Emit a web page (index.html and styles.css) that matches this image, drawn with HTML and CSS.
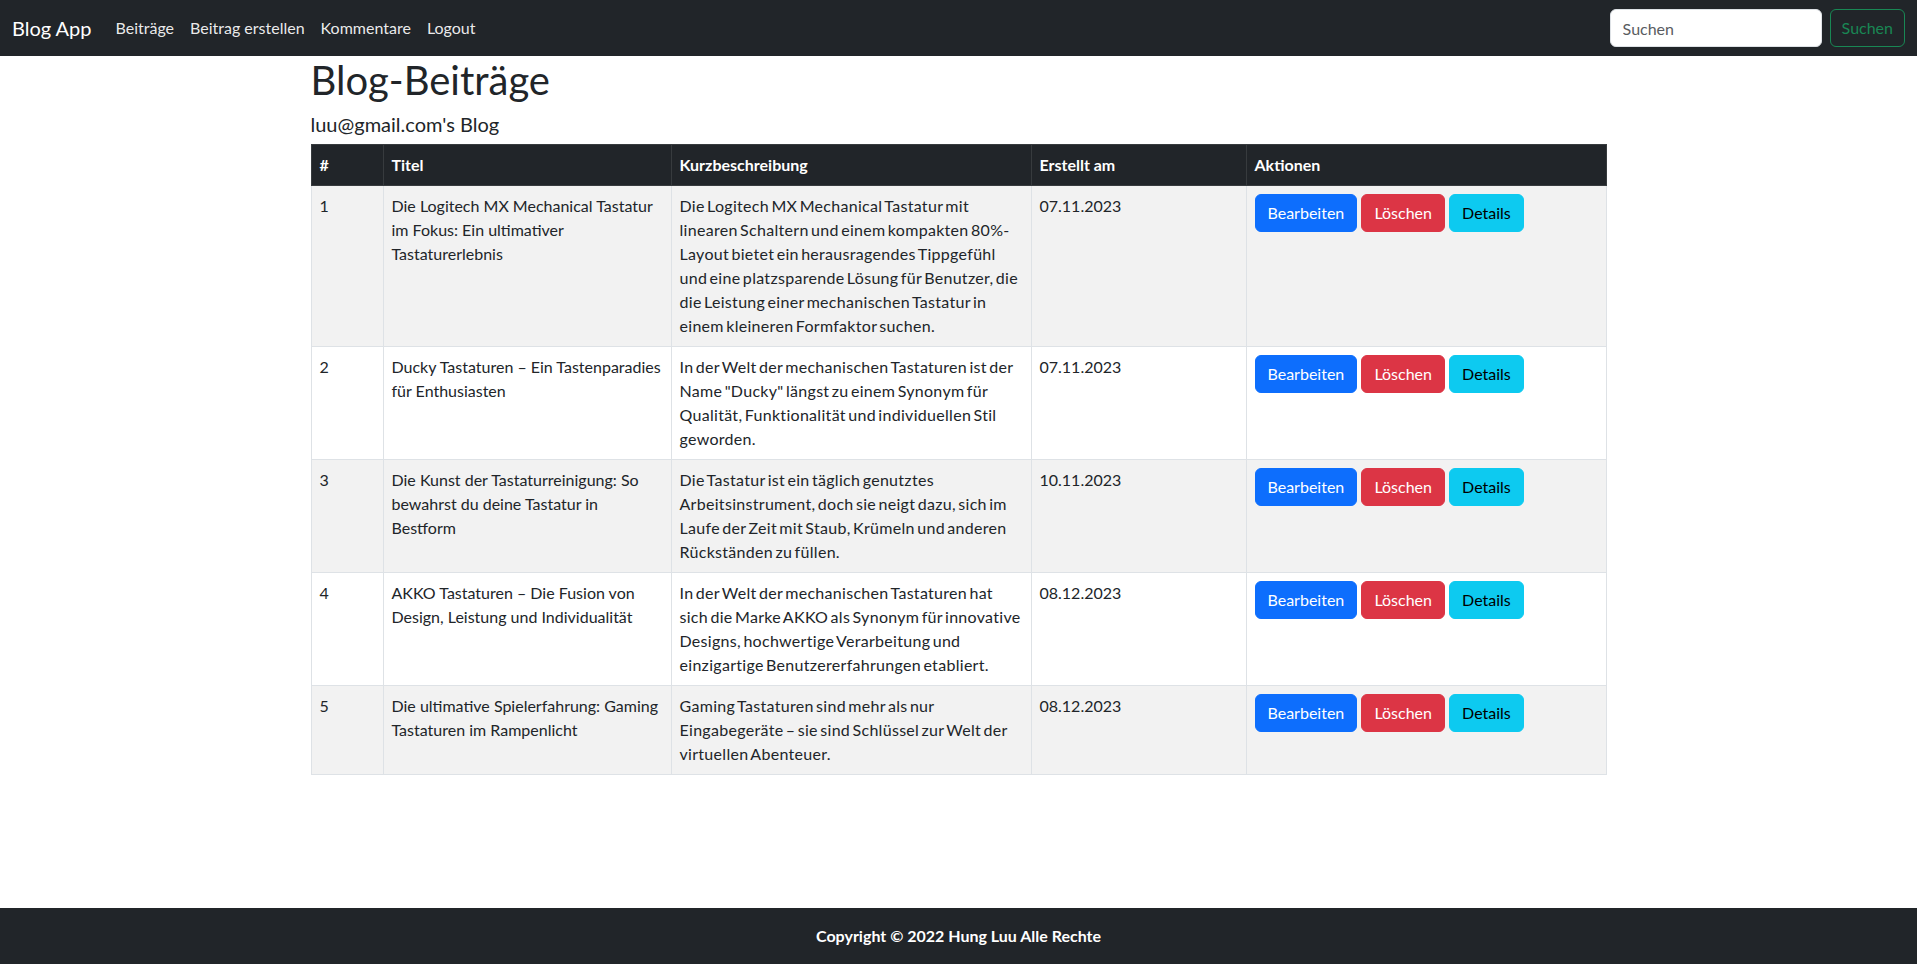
FILE: index.html
```html
<!DOCTYPE html>
<html lang="de">
<head>
<meta charset="utf-8">
<title>Blog App</title>
<link rel="stylesheet" href="styles.css">
</head>
<body>
<nav class="navbar">
  <div class="nav-left">
    <a class="brand" href="#">Blog App</a>
    <ul class="nav-links">
      <li><a href="#">Beiträge</a></li>
      <li><a href="#">Beitrag erstellen</a></li>
      <li><a href="#">Kommentare</a></li>
      <li><a href="#">Logout</a></li>
    </ul>
  </div>
  <form class="search">
    <input class="search-input" type="search" placeholder="Suchen">
    <button class="search-btn" type="button">Suchen</button>
  </form>
</nav>

<main class="container">
  <h1 class="title">Blog-Beiträge</h1>
  <h5 class="subtitle">luu@gmail.com's Blog</h5>
  <table class="posts">
    <colgroup>
      <col class="c-num"><col class="c-title"><col class="c-desc"><col class="c-date"><col class="c-act">
    </colgroup>
    <thead>
      <tr><th>#</th><th>Titel</th><th>Kurzbeschreibung</th><th>Erstellt am</th><th>Aktionen</th></tr>
    </thead>
    <tbody>
      <tr>
        <td>1</td>
        <td>Die Logitech MX Mechanical Tastatur im Fokus: Ein ultimativer Tastaturerlebnis</td>
        <td class="desc">Die Logitech MX Mechanical Tastatur mit linearen Schaltern und einem kompakten 80%-Layout bietet ein herausragendes Tippgefühl und eine platzsparende Lösung für Benutzer, die die Leistung einer mechanischen Tastatur in einem kleineren Formfaktor suchen.</td>
        <td>07.11.2023</td>
        <td><a class="btn btn-primary" href="#">Bearbeiten</a> <a class="btn btn-danger" href="#">Löschen</a> <a class="btn btn-info" href="#">Details</a></td>
      </tr>
      <tr>
        <td>2</td>
        <td>Ducky Tastaturen – Ein Tastenparadies für Enthusiasten</td>
        <td class="desc">In der Welt der mechanischen Tastaturen ist der Name "Ducky" längst zu einem Synonym für Qualität, Funktionalität und individuellen Stil geworden.</td>
        <td>07.11.2023</td>
        <td><a class="btn btn-primary" href="#">Bearbeiten</a> <a class="btn btn-danger" href="#">Löschen</a> <a class="btn btn-info" href="#">Details</a></td>
      </tr>
      <tr>
        <td>3</td>
        <td>Die Kunst der Tastaturreinigung: So bewahrst du deine Tastatur in Bestform</td>
        <td class="desc">Die Tastatur ist ein täglich genutztes Arbeitsinstrument, doch sie neigt dazu, sich im Laufe der Zeit mit Staub, Krümeln und anderen Rückständen zu füllen.</td>
        <td>10.11.2023</td>
        <td><a class="btn btn-primary" href="#">Bearbeiten</a> <a class="btn btn-danger" href="#">Löschen</a> <a class="btn btn-info" href="#">Details</a></td>
      </tr>
      <tr>
        <td>4</td>
        <td>AKKO Tastaturen – Die Fusion von Design, Leistung und Individualität</td>
        <td class="desc">In der Welt der mechanischen Tastaturen hat sich die Marke AKKO als Synonym für innovative Designs, hochwertige Verarbeitung und einzigartige Benutzererfahrungen etabliert.</td>
        <td>08.12.2023</td>
        <td><a class="btn btn-primary" href="#">Bearbeiten</a> <a class="btn btn-danger" href="#">Löschen</a> <a class="btn btn-info" href="#">Details</a></td>
      </tr>
      <tr>
        <td>5</td>
        <td>Die ultimative Spielerfahrung: Gaming Tastaturen im Rampenlicht</td>
        <td class="desc">Gaming Tastaturen sind mehr als nur Eingabegeräte – sie sind Schlüssel zur Welt der virtuellen Abenteuer.</td>
        <td>08.12.2023</td>
        <td><a class="btn btn-primary" href="#">Bearbeiten</a> <a class="btn btn-danger" href="#">Löschen</a> <a class="btn btn-info" href="#">Details</a></td>
      </tr>
    </tbody>
  </table>
</main>

<footer class="footer">
  <p>Copyright © 2022 Hung Luu Alle Rechte</p>
</footer>
</body>
</html>
```

FILE: styles.css
```css
* { box-sizing: border-box; }

html, body {
  margin: 0;
  padding: 0;
}

body {
  font-family: Lato, "Liberation Sans", sans-serif;
  font-size: 16px;
  line-height: 1.5;
  color: #212529;
  background: #fff;
  min-height: 100vh;
  display: flex;
  flex-direction: column;
}

a { text-decoration: none; }

.navbar {
  background: #212529;
  display: flex;
  align-items: center;
  justify-content: space-between;
  padding: 8px 12px;
  height: 56px;
}

.nav-left {
  display: flex;
  align-items: center;
}

.brand {
  color: #fff;
  font-size: 20px;
  line-height: 30px;
  padding: 5px 0;
  margin-right: 16px;
}

.nav-links {
  list-style: none;
  display: flex;
  margin: 0;
  padding: 0;
}

.nav-links a {
  display: block;
  color: rgba(255, 255, 255, 0.92);
  padding: 8px 8px;
  line-height: 24px;
}

.search {
  display: flex;
  align-items: center;
  margin: 0;
}

.search-input {
  width: 212px;
  height: 38px;
  padding: 6px 12px;
  font: inherit;
  font-size: 16px;
  color: #212529;
  background: #fff;
  border: 1px solid #dee2e6;
  border-radius: 6px;
  margin-right: 8px;
  outline: none;
}

.search-input::placeholder { color: #595c5f; }

.search-btn {
  height: 38px;
  padding: 6px 11px;
  font: inherit;
  font-size: 16px;
  color: #198754;
  background: transparent;
  border: 1px solid #198754;
  border-radius: 6px;
}

.container {
  width: 100%;
  max-width: 1320px;
  margin: 0 auto;
  padding: 0 12px;
}

.title {
  margin: 0 0 8px;
  font-size: 40px;
  font-weight: 400;
  line-height: 1.2;
}

.subtitle {
  margin: 0 0 8px;
  font-size: 20px;
  font-weight: 400;
  line-height: 1.2;
}

.posts {
  width: 100%;
  border-collapse: collapse;
  table-layout: fixed;
  border: 1px solid #dee2e6;
  margin-bottom: 16px;
}

.c-num { width: 72px; }
.c-title { width: 288px; }
.c-desc { width: 360px; }
.c-date { width: 215px; }
.c-act { width: auto; }

.posts th {
  background: #212529;
  color: #fff;
  text-align: left;
  font-weight: 700;
  padding: 8px;
  border: 1px solid #373b3e;
  vertical-align: bottom;
}

.posts td {
  padding: 8px;
  border: 1px solid #dee2e6;
  vertical-align: top;
}

.posts td.desc {
  letter-spacing: 0.3px;
  word-spacing: -2px;
}

.posts tbody tr:nth-child(odd) td {
  background: #f2f2f2;
}

.btn {
  display: inline-block;
  padding: 6px 12px;
  font-size: 16px;
  line-height: 24px;
  border: 1px solid transparent;
  border-radius: 6px;
  text-align: center;
}

.btn-primary { background: #0d6efd; border-color: #0d6efd; color: #fff; }
.btn-danger { background: #dc3545; border-color: #dc3545; color: #fff; }
.btn-info { background: #0dcaf0; border-color: #0dcaf0; color: #000; }

.footer {
  margin-top: auto;
  background: #212529;
  color: #fff;
  text-align: center;
  height: 56px;
  display: flex;
  align-items: center;
  justify-content: center;
}

.footer p {
  margin: 0;
  font-weight: 700;
}
```
